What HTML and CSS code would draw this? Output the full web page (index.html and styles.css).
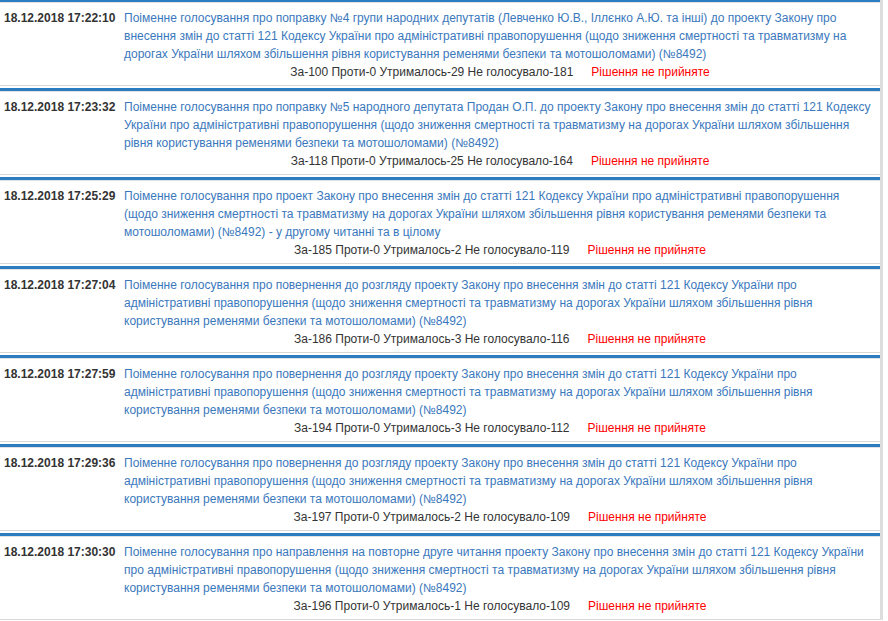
FILE: index.html
```html
<!DOCTYPE html>
<html lang="uk">
<head>
    <meta charset="UTF-8">
    <meta name="viewport" content="width=device-width, initial-scale=1.0">
    <title>Поіменні голосування</title>
    <link rel="stylesheet" href="styles.css">
</head>
<body>
    <div class="list">

        <!-- 17:22:10 -->
        <div class="vote">
            <div class="date">18.12.2018 17:22:10</div>
            <div class="info">
                <a class="title" href="#">Поіменне голосування про поправку №4 групи народних депутатів (Левченко Ю.В., Іллєнко А.Ю. та інші) до проекту Закону про внесення змін до статті 121 Кодексу України про адміністративні правопорушення (щодо зниження смертності та травматизму на дорогах України шляхом збільшення рівня користування ременями безпеки та мотошоломами) (№8492)</a>
                <div class="result"><span>За-100 Проти-0 Утрималось-29 Не голосувало-181</span><span class="fail">Рішення не прийняте</span></div>
            </div>
        </div>

        <!-- 17:23:32 -->
        <div class="vote">
            <div class="date">18.12.2018 17:23:32</div>
            <div class="info">
                <a class="title" href="#">Поіменне голосування про поправку №5 народного депутата Продан О.П. до проекту Закону про внесення змін до статті 121 Кодексу України про адміністративні правопорушення (щодо зниження смертності та травматизму на дорогах України шляхом збільшення рівня користування ременями безпеки та мотошоломами) (№8492)</a>
                <div class="result"><span>За-118 Проти-0 Утрималось-25 Не голосувало-164</span><span class="fail">Рішення не прийняте</span></div>
            </div>
        </div>

        <!-- 17:25:29 -->
        <div class="vote">
            <div class="date">18.12.2018 17:25:29</div>
            <div class="info">
                <a class="title" href="#">Поіменне голосування про проект Закону про внесення змін до статті 121 Кодексу України про адміністративні правопорушення (щодо зниження смертності та травматизму на дорогах України шляхом збільшення рівня користування ременями безпеки та мотошоломами) (№8492) - у другому читанні та в цілому</a>
                <div class="result"><span>За-185 Проти-0 Утрималось-2 Не голосувало-119</span><span class="fail">Рішення не прийняте</span></div>
            </div>
        </div>

        <!-- 17:27:04 -->
        <div class="vote">
            <div class="date">18.12.2018 17:27:04</div>
            <div class="info">
                <a class="title" href="#">Поіменне голосування про повернення до розгляду проекту Закону про внесення змін до статті 121 Кодексу України про адміністративні правопорушення (щодо зниження смертності та травматизму на дорогах України шляхом збільшення рівня користування ременями безпеки та мотошоломами) (№8492)</a>
                <div class="result"><span>За-186 Проти-0 Утрималось-3 Не голосувало-116</span><span class="fail">Рішення не прийняте</span></div>
            </div>
        </div>

        <!-- 17:27:59 -->
        <div class="vote">
            <div class="date">18.12.2018 17:27:59</div>
            <div class="info">
                <a class="title" href="#">Поіменне голосування про повернення до розгляду проекту Закону про внесення змін до статті 121 Кодексу України про адміністративні правопорушення (щодо зниження смертності та травматизму на дорогах України шляхом збільшення рівня користування ременями безпеки та мотошоломами) (№8492)</a>
                <div class="result"><span>За-194 Проти-0 Утрималось-3 Не голосувало-112</span><span class="fail">Рішення не прийняте</span></div>
            </div>
        </div>

        <!-- 17:29:36 -->
        <div class="vote">
            <div class="date">18.12.2018 17:29:36</div>
            <div class="info">
                <a class="title" href="#">Поіменне голосування про повернення до розгляду проекту Закону про внесення змін до статті 121 Кодексу України про адміністративні правопорушення (щодо зниження смертності та травматизму на дорогах України шляхом збільшення рівня користування ременями безпеки та мотошоломами) (№8492)</a>
                <div class="result"><span>За-197 Проти-0 Утрималось-2 Не голосувало-109</span><span class="fail">Рішення не прийняте</span></div>
            </div>
        </div>

        <!-- 17:30:30 -->
        <div class="vote">
            <div class="date">18.12.2018 17:30:30</div>
            <div class="info">
                <a class="title" href="#">Поіменне голосування про направлення на повторне друге читання проекту Закону про внесення змін до статті 121 Кодексу України про адміністративні правопорушення (щодо зниження смертності та травматизму на дорогах України шляхом збільшення рівня користування ременями безпеки та мотошоломами) (№8492)</a>
                <div class="result"><span>За-196 Проти-0 Утрималось-1 Не голосувало-109</span><span class="fail">Рішення не прийняте</span></div>
            </div>
        </div>

    </div>
</body>
</html>
```

FILE: styles.css
```css
body {
    font-family: "Liberation Sans", Arial, sans-serif;
    font-size: 12px;
    line-height: 18px;
    color: #333;
    background: #fff;
    margin: 0;
}
.list {
    width: 880px;
    min-height: 100vh;
    margin-top: -1px;
    border-right: 3px solid #ddd;
}
.vote {
    display: grid;
    grid-template-columns: 114px 1fr;
    column-gap: 6px;
    border-top: 3px solid #2c7cc2;
    border-bottom: 1px solid #d8d8d8;
    box-shadow: inset 0 1px 0 #e2e2e2;
    padding: 7px 4px 4px 4px;
    margin-bottom: 2px;
}
.date {
    font-weight: bold;
    white-space: nowrap;
}
.title {
    color: #3a78bd;
    text-decoration: none;
}
.result {
    text-align: center;
}
.fail {
    color: #f00;
    margin-left: 18px;
}
```
